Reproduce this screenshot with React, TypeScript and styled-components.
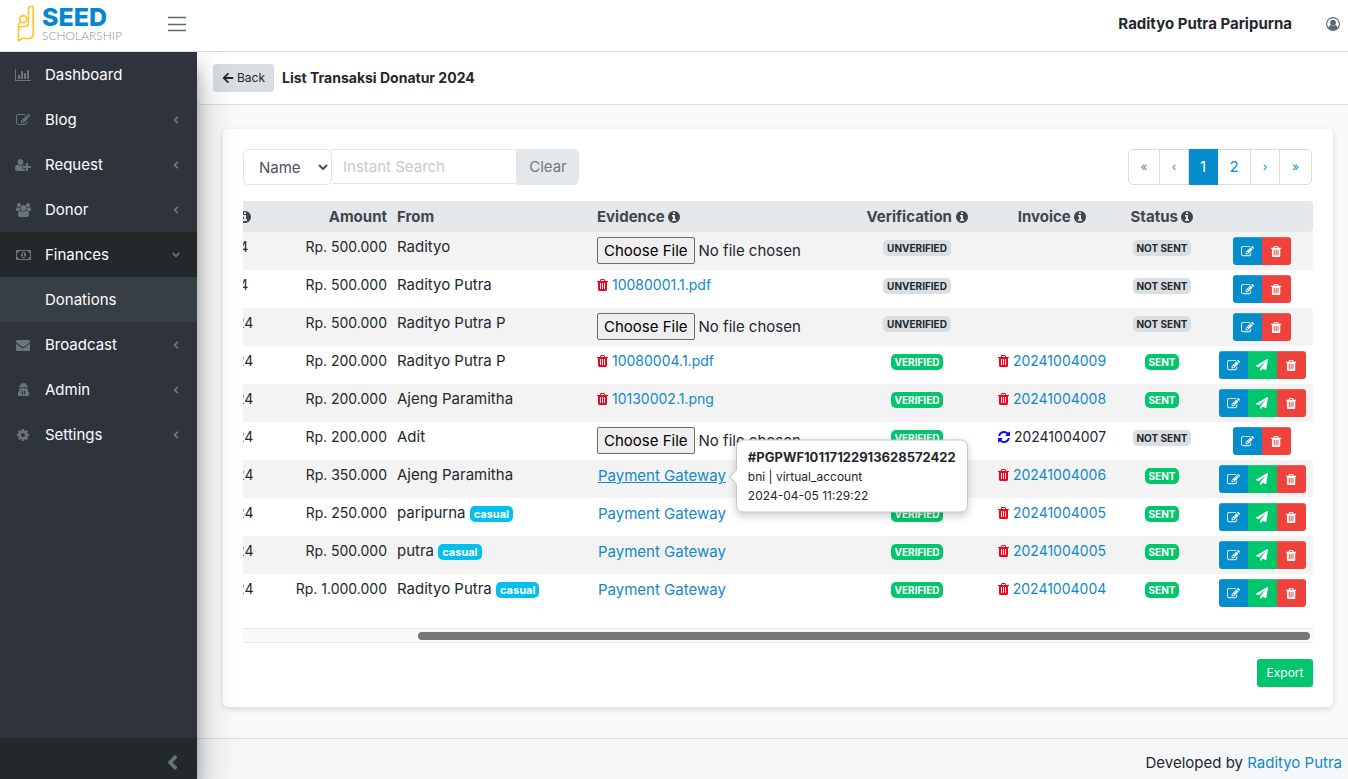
import React, { useLayoutEffect, useRef } from 'react';
import styled, { createGlobalStyle, css } from 'styled-components';
import { FaAngleLeft, FaAngleDown, FaArrowLeft, FaUserSecret } from 'react-icons/fa';

const GlobalStyle = createGlobalStyle`
  *, *::before, *::after { box-sizing: border-box; }
  body {
    margin: 0;
    background: #fafafa;
    color: #23282c;
    font-family: Inter, 'Open Sans', 'Liberation Sans', sans-serif;
    font-size: 15px;
    line-height: 20px;
  }
  button, input, select { font: inherit; margin: 0; }
  a { color: #1189c8; text-decoration: none; }
`;

/* ---------- icons ---------- */

const glyphs = {
  trash: {
    x: 192,
    w: 1408,
    d: 'M704 1376v-704q0-14-9-23t-23-9h-64q-14 0-23 9t-9 23v704q0 14 9 23t23 9h64q14 0 23-9t9-23zm256 0v-704q0-14-9-23t-23-9h-64q-14 0-23 9t-9 23v704q0 14 9 23t23 9h64q14 0 23-9t9-23zm256 0v-704q0-14-9-23t-23-9h-64q-14 0-23 9t-9 23v704q0 14 9 23t23 9h64q14 0 23-9t9-23zm-544-992h448l-48-117q-7-9-17-11h-317q-10 2-17 11zm928 32v64q0 14-9 23t-23 9h-96v948q0 83-47 143.5t-113 60.5h-832q-66 0-113-58.5t-47-141.5v-952h-96q-14 0-23-9t-9-23v-64q0-14 9-23t23-9h309l70-167q15-37 54-63t79-26h320q40 0 79 26t54 63l70 167h309q14 0 23 9t9 23z',
  },
  edit: {
    x: 0,
    w: 1792,
    d: 'M888 1184l116-116-152-152-116 116v56h96v96h56zm440-720q-16-16-33 1l-350 350q-17 17-1 33t33-1l350-350q17-17 1-33zm80 594v190q0 119-84.5 203.5t-203.5 84.5h-832q-119 0-203.5-84.5t-84.5-203.5v-832q0-119 84.5-203.5t203.5-84.5h832q63 0 117 25 15 7 18 23 3 17-9 29l-49 49q-14 14-32 8-23-6-45-6h-832q-66 0-113 47t-47 113v832q0 66 47 113t113 47h832q66 0 113-47t47-113v-126q0-13 9-22l64-64q15-15 35-7t20 29zm-96-738l288 288-672 672h-288v-288zm444 132l-92 92-288-288 92-92q28-28 68-28t68 28l152 152q28 28 28 68t-28 68z',
  },
  refresh: {
    x: 128,
    w: 1536,
    d: 'M1639 1056q0 5-1 7-64 268-268 434.5t-478 166.5q-146 0-282.5-55t-243.5-157l-129 129q-19 19-45 19t-45-19-19-45v-448q0-26 19-45t45-19h448q26 0 45 19t19 45-19 45l-137 137q71 66 161 102t187 36q134 0 250-65t186-179q11-17 53-117 8-23 30-23h192q13 0 22.5 9.5t9.5 22.5zm25-800v448q0 26-19 45t-45 19h-448q-26 0-45-19t-19-45 19-45l138-138q-148-137-349-137-134 0-250 65t-186 179q-11 17-53 117-8 23-30 23h-199q-13 0-22.5-9.5t-9.5-22.5v-7q65-268 270-434.5t480-166.5q146 0 284 55.5t245 156.5l130-129q19-19 45-19t45 19 19 45z',
  },
  info: {
    x: 128,
    w: 1536,
    d: 'M1152 1376v-160q0-14-9-23t-23-9h-96v-512q0-14-9-23t-23-9h-320q-14 0-23 9t-9 23v160q0 14 9 23t23 9h96v320h-96q-14 0-23 9t-9 23v160q0 14 9 23t23 9h448q14 0 23-9t9-23zm-128-896v-160q0-14-9-23t-23-9h-192q-14 0-23 9t-9 23v160q0 14 9 23t23 9h192q14 0 23-9t9-23zm640 416q0 209-103 385.5t-279.5 279.5-385.5 103-385.5-103-279.5-279.5-103-385.5 103-385.5 279.5-279.5 385.5-103 385.5 103 279.5 279.5 103 385.5z',
  },
  plane: {
    x: 0,
    w: 1792,
    d: 'M1764 11q33 24 27 64l-256 1536q-5 29-32 45-14 8-31 8-11 0-24-5l-453-185-242 295q-18 23-49 23-13 0-22-4-19-7-30.5-23.5t-11.5-36.5v-349l864-1059-1069 925-395-162q-37-14-40-55-2-40 32-59l1664-960q15-9 32-9 20 0 36 11z',
  },
  chart: {
    x: 0,
    w: 2048,
    d: 'M640 896v512h-256v-512h256zm384-512v1024h-256v-1024h256zm1024 1152v128h-2048v-1536h128v1408h1920zm-640-896v768h-256v-768h256zm384-384v1152h-256v-1152h256z',
  },
  userPlus: {
    x: 0,
    w: 2048,
    d: 'M704 896q-159 0-271.5-112.5t-112.5-271.5 112.5-271.5 271.5-112.5 271.5 112.5 112.5 271.5-112.5 271.5-271.5 112.5zm960 128h352q13 0 22.5 9.5t9.5 22.5v192q0 13-9.5 22.5t-22.5 9.5h-352v352q0 13-9.5 22.5t-22.5 9.5h-192q-13 0-22.5-9.5t-9.5-22.5v-352h-352q-13 0-22.5-9.5t-9.5-22.5v-192q0-13 9.5-22.5t22.5-9.5h352v-352q0-13 9.5-22.5t22.5-9.5h192q13 0 22.5 9.5t9.5 22.5v352zm-736 224q0 52 38 90t90 38h256v238q-68 50-171 50h-874q-121 0-194-69t-73-190q0-53 3.5-103.5t14-109 26.5-108.5 43-97.5 62-81 85.5-53.5 111.5-20q19 0 39 17 79 61 154.5 91.5t164.5 30.5 164.5-30.5 154.5-91.5q20-17 39-17 132 0 217 96h-223q-52 0-90 38t-38 90v192z',
  },
  users: {
    x: 0,
    w: 1920,
    d: 'M593 896q-162 5-265 128h-134q-82 0-138-40.5t-56-118.5q0-353 124-353 6 0 43.5 21t97.5 42.5 119 21.5q67 0 133-23-5 37-5 66 0 139 81 256zm1071 637q0 120-73 189.5t-194 69.5h-874q-121 0-194-69.5t-73-189.5q0-53 3.5-103.5t14-109 26.5-108.5 43-97.5 62-81 85.5-53.5 111.5-20q10 0 43 21.5t73 48 107 48 135 21.5 135-21.5 107-48 73-48 43-21.5q61 0 111.5 20t85.5 53.5 62 81 43 97.5 26.5 108.5 14 109 3.5 103.5zm-1024-1277q0 106-75 181t-181 75-181-75-75-181 75-181 181-75 181 75 75 181zm704 384q0 159-112.5 271.5t-271.5 112.5-271.5-112.5-112.5-271.5 112.5-271.5 271.5-112.5 271.5 112.5 112.5 271.5zm576 225q0 78-56 118.5t-138 40.5h-134q-103-123-265-128 81-117 81-256 0-29-5-66 66 23 133 23 59 0 119-21.5t97.5-42.5 43.5-21q124 0 124 353zm-128-609q0 106-75 181t-181 75-181-75-75-181 75-181 181-75 181 75 75 181z',
  },
  money: {
    x: 0,
    w: 1920,
    d: 'M768 1152h384v-96h-128v-448h-114l-148 137 77 80q42-37 55-57h2v288h-128v96zm512-256q0 70-21 142t-59.5 134-101.5 101-138 39-138-39-101.5-101-59.5-134-21-142 21-142 59.5-134 101.5-101 138-39 138 39 101.5 101 59.5 134 21 142zm512 256v-512q-106 0-181-75t-75-181h-1152q0 106-75 181t-181 75v512q106 0 181 75t75 181h1152q0-106 75-181t181-75zm128-832v1152q0 26-19 45t-45 19h-1792q-26 0-45-19t-19-45v-1152q0-26 19-45t45-19h1792q26 0 45 19t19 45z',
  },
  envelope: {
    x: 0,
    w: 1792,
    d: 'M1792 710v794q0 66-47 113t-113 47h-1472q-66 0-113-47t-47-113v-794q44 49 101 87 362 246 497 345 57 42 92.5 65.5t94.5 48 110 24.5h2q51 0 110-24.5t94.5-48 92.5-65.5q170-123 498-345 57-39 100-87zm0-294q0 79-49 151t-122 123q-376 261-468 325-10 7-42.5 31t-54 38.5-52 32.5-57.5 27-50 9h-2q-23 0-50-9t-57.5-27-52-32.5-54-38.5-42.5-31q-91-64-262-182.5t-205-142.5q-62-42-117-115.5t-55-136.5q0-78 41.5-130t118.5-52h1472q65 0 112.5 47t47.5 113z',
  },
  cog: {
    x: 0,
    w: 1792,
    d: 'M1152 896q0-106-75-181t-181-75-181 75-75 181 75 181 181 75 181-75 75-181zm512-109v222q0 12-8 23t-20 13l-185 28q-19 54-39 91 35 50 107 138 10 12 10 25t-9 23q-27 37-99 108t-94 71q-12 0-26-9l-138-108q-44 23-91 38-16 136-29 186-7 28-36 28h-222q-14 0-24.5-8.5t-11.5-21.5l-28-184q-49-16-90-37l-141 107q-10 9-25 9-14 0-25-11-126-114-165-168-7-10-7-23 0-12 8-23 15-21 51-66.5t54-70.5q-27-50-41-99l-183-27q-13-2-21-12.5t-8-23.5v-222q0-12 8-23t19-13l186-28q14-46 39-92-40-57-107-138-10-12-10-24 0-10 9-23 26-36 98.5-107.5t94.5-71.5q13 0 26 10l138 107q44-23 91-38 16-136 29-186 7-28 36-28h222q14 0 24.5 8.5t11.5 21.5l28 184q49 16 90 37l142-107q9-9 24-9 13 0 25 10 129 119 165 170 7 8 7 22 0 12-8 23-15 21-51 66.5t-54 70.5q26 50 41 98l183 28q13 2 21 12.5t8 23.5z',
  },
};

type GlyphName = keyof typeof glyphs;

const GlyphSvg = styled.svg<{ $size: number }>`
  height: ${(p) => p.$size}px;
  flex: none;
  vertical-align: -2px;
  fill: currentColor;
`;

const Glyph = ({ name, size = 14 }: { name: GlyphName; size?: number }) => (
  <GlyphSvg $size={size} viewBox={`${glyphs[name].x} 0 ${glyphs[name].w} 1792`} aria-hidden="true">
    <path d={glyphs[name].d} />
  </GlyphSvg>
);

/* ---------- shell ---------- */

const Page = styled.div`
  display: flex;
  flex-direction: column;
  min-height: 100vh;
`;

const TopBar = styled.header`
  position: relative;
  z-index: 3;
  display: flex;
  align-items: center;
  height: 52px;
  padding: 0 8px 4px 17px;
  background: #fff;
  border-bottom: 1px solid #d8dbe0;
`;

const Brand = styled.a`
  display: flex;
  gap: 7px;
  align-items: center;
  width: 150px;
`;

const BrandText = styled.span`
  display: flex;
  flex-direction: column;
`;

const BrandName = styled.span`
  color: #0387d3;
  font-size: 25px;
  font-weight: 800;
  line-height: 24px;
`;

const BrandSub = styled.span`
  color: #8d9194;
  font-family: Lato, sans-serif;
  font-size: 12px;
  font-weight: 300;
  line-height: 13px;
`;

const IconButton = styled.button`
  display: flex;
  padding: 0;
  border: 0;
  background: none;
  color: #5c6873;
`;

const Account = styled.div`
  display: flex;
  align-items: center;
  gap: 34px;
  margin-left: auto;
  font-weight: 700;
`;

const Body = styled.div`
  display: flex;
  flex: 1;
`;

const Sidebar = styled.aside`
  position: relative;
  z-index: 2;
  display: flex;
  flex: none;
  flex-direction: column;
  width: 197px;
  background: #2f333b;
  box-shadow: 0 19px 38px rgba(0, 0, 0, 0.3), 0 15px 12px rgba(0, 0, 0, 0.22);
`;

const Nav = styled.nav`
  flex: 1;
`;

const NavItem = styled.a<{ $state?: 'open' | 'child' }>`
  display: flex;
  align-items: center;
  height: 45px;
  padding: 0 15px;
  color: #fff;
  background: ${(p) => (p.$state === 'open' ? '#23282b' : p.$state === 'child' ? '#373e44' : 'transparent')};
`;

const NavIcon = styled.span`
  display: flex;
  justify-content: center;
  width: 16px;
  margin-right: 14px;
  color: #69757d;
`;

const NavArrow = styled.span`
  display: flex;
  margin-left: auto;
  color: #69757d;
  font-size: 12px;
`;

const Minimizer = styled.button`
  display: flex;
  align-items: center;
  justify-content: flex-end;
  height: 41px;
  padding: 7px 13px 0;
  border: 0;
  background: #23282b;
  color: #69757d;
  font-size: 23px;
`;

const Main = styled.main`
  display: flex;
  flex: 1;
  flex-direction: column;
  min-width: 0;
`;

const SubHeader = styled.div`
  display: flex;
  align-items: center;
  gap: 8px;
  height: 53px;
  padding: 0 16px;
  background: #fff;
  border-bottom: 1px solid #d5dce2;
  border-bottom-left-radius: 4px;
`;

const BackButton = styled.button`
  display: flex;
  align-items: center;
  gap: 3px;
  height: 28px;
  padding: 0 8px;
  border: 1px solid #d5dade;
  border-radius: 3px;
  background: #d9dee2;
  color: #23282c;
  font-size: 12px;
`;

const Title = styled.h1`
  margin: 0;
  font-size: 14px;
  font-weight: 700;
`;

const Card = styled.section`
  margin: 24px 15px 31px 26px;
  padding: 20px;
  border-radius: 5px;
  background: #fff;
  box-shadow: 0 2px 6px rgba(0, 0, 0, 0.14);
`;

const Toolbar = styled.div`
  display: flex;
  justify-content: space-between;
  margin-bottom: 16px;
`;

const SearchGroup = styled.div`
  display: flex;
  align-items: flex-start;
`;

const FieldSelect = styled.select`
  width: 89px;
  height: 36px;
  padding: 0 0 0 11px;
  border: 1px solid #e1e5e9;
  border-radius: 5px;
  background: #fff;
  color: #4a5058;
`;

const SearchInput = styled.input`
  width: 185px;
  height: 35px;
  padding: 0 11px;
  border: 1px solid #e1e5e9;
  border-left: 0;
  background: #fff;
  &::placeholder { color: #c5cad0; }
`;

const ClearButton = styled.button`
  width: 62px;
  height: 36px;
  padding: 0;
  border: 0;
  border-radius: 0 5px 5px 0;
  background: #e4e8eb;
  color: #73777b;
`;

const Pager = styled.nav`
  display: flex;
  height: 36px;
  margin-right: 1px;
  border: 1px solid #d8dde1;
  border-radius: 5px;
`;

const PageButton = styled.button<{ $tone?: 'current' | 'muted'; $wide?: boolean; $arrow?: boolean }>`
  width: ${(p) => (p.$wide ? 33 : 29)}px;
  padding: 0;
  border: 0;
  border-right: 1px solid #d8dde1;
  background: none;
  color: ${(p) => (p.$tone === 'muted' ? '#73818f' : '#0a8bcb')};
  font-size: ${(p) => (p.$arrow ? 12 : 15)}px;
  &:first-child, &:last-child { width: 31px; }
  &:last-child { border-right: 0; }
  ${(p) => p.$tone === 'current' && css`
    margin: -1px 0;
    border-color: #058ccb;
    background: #058ccb;
    color: #fff;
  `}
`;

/* ---------- table ---------- */

const Scroller = styled.div`
  overflow: hidden;
  padding-bottom: 16px;
`;

const Table = styled.table`
  width: 100%;
  min-width: 1280px;
  table-layout: fixed;
  border-spacing: 0;
`;

type Align = 'left' | 'right' | 'center';

const Th = styled.th<{ $align: Align; $width?: number }>`
  width: ${(p) => (p.$width ? `${p.$width}px` : 'auto')};
  height: 31px;
  padding: 0 5px;
  background: #e4e8eb;
  color: #40464d;
  font-weight: 700;
  text-align: ${(p) => p.$align};
  white-space: nowrap;
  &:last-child { border-radius: 0 4px 4px 0; }
`;

const Row = styled.tr`
  height: 38px;
  &:nth-child(odd) td { background: #f3f3f3; }
`;

const Td = styled.td<{ $align?: Align; $numeric?: boolean }>`
  height: 38px;
  padding: 5px;
  font-size: ${(p) => (p.$numeric ? 14 : 15)}px;
  text-align: ${(p) => p.$align ?? 'left'};
  vertical-align: top;
  white-space: nowrap;
  &:last-child { border-radius: 0 4px 4px 0; }
`;

const tones = {
  grey: ['#d9dee2', '#23282c'],
  green: ['#02c66c', '#fff'],
  cyan: ['#02bfee', '#fff'],
};

const Badge = styled.span<{ $tone: keyof typeof tones }>`
  display: inline-block;
  padding: 0 4px;
  border-radius: 5px;
  background: ${(p) => tones[p.$tone][0]};
  color: ${(p) => tones[p.$tone][1]};
  font-size: ${(p) => (p.$tone === 'cyan' ? 11 : 10)}px;
  font-weight: 700;
  line-height: 16px;
`;

const FileInput = styled.input`
  display: block;
  width: 210px;
  height: 27px;
  &::file-selector-button {
    height: 27px;
    margin: 0 4px 0 0;
    padding: 1px 6px;
    border: 1px solid #6b6b6b;
    border-radius: 2px;
    background: #efefef;
    color: #000;
    font: inherit;
  }
`;

const InlineIcon = styled.button<{ $color: string }>`
  margin: 0 4px 0 0;
  padding: 0;
  border: 0;
  background: none;
  color: ${(p) => p.$color};
`;

const Gateway = styled.span`
  position: relative;
  display: inline-block;
  padding: 1px;
`;

const GatewayLink = styled.a<{ $active?: boolean }>`
  text-decoration: ${(p) => (p.$active ? 'underline' : 'none')};
`;

const Tooltip = styled.div`
  position: absolute;
  z-index: 1;
  top: 50%;
  left: calc(100% + 9px);
  padding: 7px 11px;
  border: 1px solid #c4c6c8;
  border-radius: 7px;
  background: #fff;
  box-shadow: 0 3px 8px rgba(0, 0, 0, 0.2);
  font-size: 12px;
  line-height: 19px;
  transform: translateY(-50%);
  &::before {
    content: '';
    position: absolute;
    top: 50%;
    left: -6px;
    width: 11px;
    height: 11px;
    margin-top: -5px;
    border: solid #c4c6c8;
    border-width: 0 0 1px 1px;
    background: #fff;
    transform: rotate(45deg);
  }
`;

const TooltipTitle = styled.strong`
  display: block;
  font-size: 13px;
`;

const Actions = styled.div`
  display: inline-flex;
  vertical-align: top;
  border-radius: 3px;
  overflow: hidden;
`;

const ActionButton = styled.button<{ $bg: string }>`
  display: flex;
  align-items: center;
  justify-content: center;
  width: 29px;
  height: 28px;
  padding: 0;
  border: 0;
  background: ${(p) => p.$bg};
  box-shadow: inset 0 1px 0 rgba(255, 255, 255, 0.15);
  color: #fff;
`;

const ScrollTrack = styled.div`
  height: 15px;
  padding: 3px 3px 3px 175px;
  border: solid #e6e6e6;
  border-width: 1px 0;
  background: #fafafa;
`;

const ScrollThumb = styled.div`
  height: 8px;
  border-radius: 4px;
  background: #777;
`;

const CardFoot = styled.div`
  display: flex;
  justify-content: flex-end;
  margin-top: 16px;
`;

const ExportButton = styled.button`
  width: 56px;
  height: 28px;
  padding: 0;
  border: 0;
  border-radius: 3px;
  background: #02c66c;
  color: #fff;
  font-size: 12px;
`;

const Footer = styled.footer`
  height: 41px;
  margin-top: auto;
  padding: 14px 6px 0;
  border-top: 1px solid #d8dbe0;
  background: #f5f7f9;
  text-align: right;
`;

/* ---------- data ---------- */

const menu: { label: string; icon?: React.ReactNode; state?: 'open' | 'child'; leaf?: boolean }[] = [
  { label: 'Dashboard', icon: <Glyph name="chart" />, leaf: true },
  { label: 'Blog', icon: <Glyph name="edit" /> },
  { label: 'Request', icon: <Glyph name="userPlus" /> },
  { label: 'Donor', icon: <Glyph name="users" /> },
  { label: 'Finances', icon: <Glyph name="money" />, state: 'open' },
  { label: 'Donations', state: 'child', leaf: true },
  { label: 'Broadcast', icon: <Glyph name="envelope" /> },
  { label: 'Admin', icon: <FaUserSecret size={13} /> },
  { label: 'Settings', icon: <Glyph name="cog" /> },
];

type Donation = {
  date: string;
  amount: string;
  from: string;
  casual?: boolean;
  file?: string;
  gateway?: boolean;
  tip?: boolean;
  verified?: boolean;
  invoice?: string;
  sent?: boolean;
};

const donations: Donation[] = [
  { date: '8 Oct 2024', amount: '500.000', from: 'Radityo' },
  { date: '8 Oct 2024', amount: '500.000', from: 'Radityo Putra', file: '10080001.1.pdf' },
  { date: '08 Oct 2024', amount: '500.000', from: 'Radityo Putra P' },
  { date: '08 Oct 2024', amount: '200.000', from: 'Radityo Putra P', file: '10080004.1.pdf', verified: true, invoice: '20241004009', sent: true },
  { date: '03 Oct 2024', amount: '200.000', from: 'Ajeng Paramitha', file: '10130002.1.png', verified: true, invoice: '20241004008', sent: true },
  { date: '03 Oct 2024', amount: '200.000', from: 'Adit', verified: true, invoice: '20241004007' },
  { date: '05 Apr 2024', amount: '350.000', from: 'Ajeng Paramitha', gateway: true, tip: true, verified: true, invoice: '20241004006', sent: true },
  { date: '05 Apr 2024', amount: '250.000', from: 'paripurna', casual: true, gateway: true, verified: true, invoice: '20241004005', sent: true },
  { date: '05 Apr 2024', amount: '500.000', from: 'putra', casual: true, gateway: true, verified: true, invoice: '20241004005', sent: true },
  { date: '05 Apr 2024', amount: '1.000.000', from: 'Radityo Putra', casual: true, gateway: true, verified: true, invoice: '20241004004', sent: true },
];

const columns: { label: string; align: Align; width?: number; info?: boolean }[] = [
  { label: 'Payment', align: 'center', info: true, width: 92 },
  { label: 'Amount', align: 'right', width: 135 },
  { label: 'From', align: 'left', width: 200 },
  { label: 'Evidence', align: 'left', width: 251, info: true },
  { label: 'Verification', align: 'center', width: 148, info: true },
  { label: 'Invoice', align: 'center', width: 122, info: true },
  { label: 'Status', align: 'center', width: 98, info: true },
  { label: '', align: 'center', width: 102 },
];

/* ---------- parts ---------- */

const Logo = () => (
  <svg width="18" height="37" viewBox="0 0 18 37" fill="none" stroke="#fcc62f" strokeWidth="1.7" strokeLinejoin="round">
    <path d="M11.500 17.500V4Q11.500 1.500 14 1.500H16.200V28.500Q16.200 33.500 11.500 33.500H5L1.500 36V25Q1.500 21.500 5 21.500H7.500Q11.500 21.500 11.500 17.500" />
    <circle cx="6.200" cy="14.200" r="3.500" />
    <path d="M1.500 25V21Q1.500 18.500 3.500 17.500" />
  </svg>
);

const AccountIcon = () => (
  <svg width="14" height="14" viewBox="0 0 14 14">
    <circle cx="7" cy="7" r="6.400" fill="none" stroke="#5c6873" strokeWidth="1.100" />
    <circle cx="7" cy="5.700" r="2.900" fill="#5c6873" />
    <path d="M2.300 11Q2.800 8.200 4.700 7.900Q7 9.600 9.300 7.900Q11.200 8.200 11.700 11Q9.800 13.200 7 13.200Q4.200 13.200 2.300 11Z" fill="#5c6873" />
  </svg>
);

const Evidence = ({ d }: { d: Donation }) => {
  if (d.gateway) {
    return (
      <Gateway>
        <GatewayLink href="#" $active={d.tip}>Payment Gateway</GatewayLink>
        {d.tip && (
          <Tooltip role="tooltip">
            <TooltipTitle>#PGPWF10117122913628572422</TooltipTitle>
            bni | virtual_account
            <br />
            2024-04-05 11:29:22
          </Tooltip>
        )}
      </Gateway>
    );
  }
  if (d.file) {
    return (
      <>
        <InlineIcon $color="#f5031d" aria-label="Delete evidence"><Glyph name="trash" /></InlineIcon>
        <a href="#">{d.file}</a>
      </>
    );
  }
  return <FileInput type="file" aria-label={`Evidence from ${d.from}`} />;
};

const Invoice = ({ d }: { d: Donation }) => {
  if (!d.invoice) return null;
  return (
    <>
      <InlineIcon $color={d.sent ? '#f5031d' : '#0b0bf0'} aria-label={d.sent ? 'Delete invoice' : 'Regenerate invoice'}>
        <Glyph name={d.sent ? 'trash' : 'refresh'} />
      </InlineIcon>
      {d.sent ? <a href="#">{d.invoice}</a> : d.invoice}
    </>
  );
};

const App = () => {
  const scroller = useRef<HTMLDivElement>(null);

  useLayoutEffect(() => {
    const el = scroller.current;
    if (el) el.scrollLeft = el.scrollWidth;
  }, []);

  return (
    <Page>
      <GlobalStyle />
      <TopBar>
        <Brand href="#">
          <Logo />
          <BrandText>
            <BrandName>SEED</BrandName>
            <BrandSub>SCHOLARSHIP</BrandSub>
          </BrandText>
        </Brand>
        <IconButton aria-label="Toggle menu">
          <svg width="20" height="18" viewBox="0 0 20 18" stroke="currentColor" strokeWidth="1.300">
            <path d="M1 2.500H19M1 9.500H19M1 15.500H19" />
          </svg>
        </IconButton>
        <Account>
          <span>Radityo Putra Paripurna</span>
          <IconButton aria-label="Account"><AccountIcon /></IconButton>
        </Account>
      </TopBar>
      <Body>
        <Sidebar>
          <Nav>
            {menu.map((m) => (
              <NavItem key={m.label} href="#" $state={m.state}>
                <NavIcon>{m.icon}</NavIcon>
                {m.label}
                {!m.leaf && <NavArrow>{m.state === 'open' ? <FaAngleDown /> : <FaAngleLeft />}</NavArrow>}
              </NavItem>
            ))}
          </Nav>
          <Minimizer aria-label="Collapse sidebar"><FaAngleLeft /></Minimizer>
        </Sidebar>
        <Main>
          <SubHeader>
            <BackButton><FaArrowLeft />Back</BackButton>
            <Title>List Transaksi Donatur 2024</Title>
          </SubHeader>
          <Card>
            <Toolbar>
              <SearchGroup>
                <FieldSelect aria-label="Search field"><option>Name</option></FieldSelect>
                <SearchInput type="text" aria-label="Search" placeholder="Instant Search" />
                <ClearButton>Clear</ClearButton>
              </SearchGroup>
              <Pager aria-label="Pages">
                <PageButton $tone="muted" $arrow>«</PageButton>
                <PageButton $tone="muted" $arrow>‹</PageButton>
                <PageButton $tone="current">1</PageButton>
                <PageButton $wide>2</PageButton>
                <PageButton $arrow>›</PageButton>
                <PageButton $arrow>»</PageButton>
              </Pager>
            </Toolbar>
            <Scroller ref={scroller}>
              <Table>
                <thead>
                  <tr>
                    <Th $align="center" aria-hidden="true" />
                    {columns.map((c) => (
                      <Th key={c.label} $align={c.align} $width={c.width}>
                        {c.label} {c.info && <Glyph name="info" />}
                      </Th>
                    ))}
                  </tr>
                </thead>
                <tbody>
                  {donations.map((d, i) => (
                    <Row key={i}>
                      <Td />
                      <Td $numeric $align="center">{d.date}</Td>
                      <Td $numeric $align="right">Rp. {d.amount}</Td>
                      <Td>{d.from} {d.casual && <Badge $tone="cyan">casual</Badge>}</Td>
                      <Td $numeric={!!d.file}><Evidence d={d} /></Td>
                      <Td $align="center">
                        <Badge $tone={d.verified ? 'green' : 'grey'}>{d.verified ? 'VERIFIED' : 'UNVERIFIED'}</Badge>
                      </Td>
                      <Td $numeric $align="center"><Invoice d={d} /></Td>
                      <Td $align="center">
                        <Badge $tone={d.sent ? 'green' : 'grey'}>{d.sent ? 'SENT' : 'NOT SENT'}</Badge>
                      </Td>
                      <Td $align="center">
                        <Actions>
                          <ActionButton $bg="#058ccb" aria-label="Edit"><Glyph name="edit" size={13} /></ActionButton>
                          {d.sent && <ActionButton $bg="#02c66c" aria-label="Send"><Glyph name="plane" size={12} /></ActionButton>}
                          <ActionButton $bg="#ef423c" aria-label="Delete"><Glyph name="trash" size={13} /></ActionButton>
                        </Actions>
                      </Td>
                    </Row>
                  ))}
                </tbody>
              </Table>
            </Scroller>
            <ScrollTrack><ScrollThumb /></ScrollTrack>
            <CardFoot><ExportButton>Export</ExportButton></CardFoot>
          </Card>
          <Footer>Developed by <a href="#">Radityo Putra</a></Footer>
        </Main>
      </Body>
    </Page>
  );
};

export default App;
